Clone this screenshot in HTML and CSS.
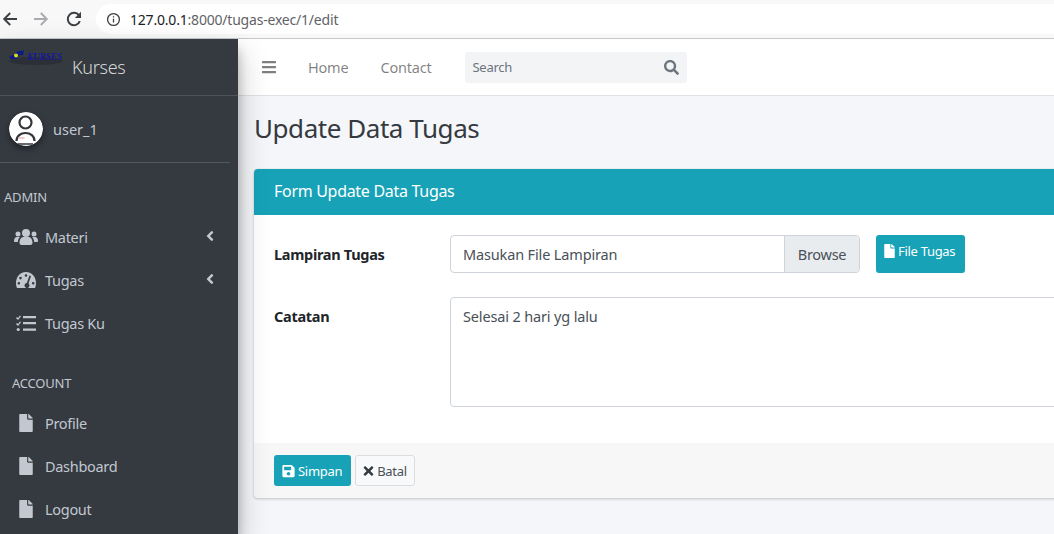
FILE: index.html
```html
<!DOCTYPE html>
<html lang="en">
  <head>
    <meta charset="UTF-8" />
    <title>Update Data Tugas</title>
    <link rel="stylesheet" href="styles.css">
  </head>
  <body>
    <svg class="defs" width="0" height="0">
      <symbol id="i-file" viewBox="0 0 384 512"><path d="M224 136V0H24C10.7 0 0 10.7 0 24v464c0 13.3 10.7 24 24 24h336c13.3 0 24-10.7 24-24V160H248c-13.2 0-24-10.8-24-24zm160-14.1v6.1H256V0h6.1c6.4 0 12.5 2.5 17 7l97.9 98c4.5 4.5 7 10.6 7 16.9z"/></symbol>
      <symbol id="i-angle" viewBox="0 0 256 512"><path d="M31.7 239l136-136c9.4-9.4 24.6-9.4 33.9 0l22.6 22.6c9.4 9.4 9.4 24.6 0 33.9L127.9 256l96.4 96.4c9.4 9.4 9.4 24.6 0 33.9L201.7 409c-9.4 9.4-24.6 9.4-33.9 0l-136-136c-9.5-9.4-9.5-24.6-.1-34z"/></symbol>
    </svg>

    <header class="browser">
      <svg class="nav-btn" viewBox="0 0 16 16" fill="none" stroke="#3c4043" stroke-width="1.9"><path d="M15 8H2.500M8.200 2L2.200 8l6 6"/></svg>
      <svg class="nav-btn nav-fwd" viewBox="0 0 16 16" fill="none" stroke="#a9abae" stroke-width="1.9"><path d="M1 8h12.500M7.800 2l6 6-6 6"/></svg>
      <svg class="nav-btn nav-reload" viewBox="0 0 16 16" fill="none" stroke="#3c4043" stroke-width="2"><path d="M13.800 10.200A6.200 6.200 0 1 1 13 4.400"/><path d="M15 .8v6.200H8.800z" fill="#3c4043" stroke="none"/></svg>
      <div class="omnibox">
        <svg class="info" viewBox="0 0 16 16" fill="none" stroke="#3c4043" stroke-width="1.4"><circle cx="8" cy="8" r="6.300"/><path d="M8 7.200v4M8 4.400v1.500"/></svg>
        <span class="host">127.0.0.1</span><span class="path">:8000/tugas-exec/1/edit</span>
      </div>
    </header>

    <div class="app">
      <aside class="sidebar">
        <div class="brand">
          <svg class="brand-logo" viewBox="0 0 56 18">
            <ellipse cx="28" cy="14" rx="27" ry="4" fill="#2c3036"/>
            <path d="M1 10l6-3 2-2.500 7-1-1 4.500-5 .5-1 3.500H3z" fill="#0c1a8a"/>
            <circle cx="8" cy="8.500" r="2" fill="#dcdc10"/>
            <text x="19" y="13" class="brand-mark" textLength="35" lengthAdjust="spacingAndGlyphs">KURSES</text>
          </svg>
          <span class="brand-text">Kurses</span>
        </div>
        <div class="user">
          <svg class="avatar" viewBox="0 0 34 34">
            <circle cx="17" cy="17" r="17" fill="#fff"/>
            <circle cx="16.500" cy="10.500" r="6" fill="none" stroke="#33373c" stroke-width="2.200"/>
            <path d="M7.500 29c0-5 4-8 9-8s9 3 9 8" fill="none" stroke="#33373c" stroke-width="2.200"/>
            <path d="M9 32h15" stroke="#33373c" stroke-width="1.500"/>
            <rect x="9.500" y="25" width="6" height="2" fill="#f6c9cc"/>
          </svg>
          <span class="user-name">user_1</span>
        </div>

        <p class="menu-head menu-head-admin">ADMIN</p>
        <ul class="menu">
          <li class="menu-item">
            <svg class="menu-icon" viewBox="0 0 24 18"><circle cx="12" cy="5" r="4"/><circle cx="4" cy="6" r="2.500"/><circle cx="20" cy="6" r="2.500"/><path d="M5.500 15c0-4 2-6 4-6h5c2 0 4 2 4 6 0 1-1 2-2 2H7.500c-1 0-2-1-2-2zM0 13c0-2 1-4 3-4h3c-1.500 1-2 3-2.200 5H1c-.6 0-1-.4-1-1zM24 13c0-2-1-4-3-4h-3c1.500 1 2 3 2.200 5H23c.6 0 1-.4 1-1z"/></svg>
            <span>Materi</span>
            <svg class="menu-arrow"><use href="#i-angle"/></svg>
          </li>
          <li class="menu-item">
            <svg class="menu-icon" viewBox="0 0 24 18"><path fill-rule="evenodd" d="M12 1C5.500 1 2 6.500 2 12c0 2 .5 4 1 5h18c.5-1 1-3 1-5 0-5.500-3.500-11-10-11zM12 3.200a1.300 1.300 0 1 1 0 2.600 1.300 1.300 0 0 1 0-2.600zM6.500 5.800a1.300 1.300 0 1 1 0 2.600 1.300 1.300 0 0 1 0-2.600zM4.800 11a1.300 1.300 0 1 1 0 2.600 1.300 1.300 0 0 1 0-2.600zM19.200 11a1.300 1.300 0 1 1 0 2.600 1.300 1.300 0 0 1 0-2.600zM15.500 4.500l1.500.5-2.500 7.500a2.500 2.500 0 1 1-1.700-.5z"/></svg>
            <span>Tugas</span>
            <svg class="menu-arrow"><use href="#i-angle"/></svg>
          </li>
          <li class="menu-item">
            <svg class="menu-icon" viewBox="0 0 24 18"><path d="M3 3l1 1 2-2.500 1 .8L4 6 2 4zM3 9l1 1 2-2.500 1 .8L4 12 2 10z"/><circle cx="4.200" cy="15.500" r="1.600"/><path d="M9 2h13v2.200H9zM9 8h13v2.200H9zM9 14.500h13v2.200H9z"/></svg>
            <span>Tugas Ku</span>
          </li>
        </ul>

        <p class="menu-head menu-head-account">ACCOUNT</p>
        <ul class="menu">
          <li class="menu-item">
            <svg class="menu-icon file-icon"><use href="#i-file"/></svg>
            <span>Profile</span>
          </li>
          <li class="menu-item">
            <svg class="menu-icon file-icon"><use href="#i-file"/></svg>
            <span>Dashboard</span>
          </li>
          <li class="menu-item">
            <svg class="menu-icon file-icon"><use href="#i-file"/></svg>
            <span>Logout</span>
          </li>
        </ul>
      </aside>

      <div class="main">
        <nav class="topbar">
          <svg class="bars" viewBox="0 0 448 512"><path d="M16 132h416c8.837 0 16-7.163 16-16V76c0-8.837-7.163-16-16-16H16C7.163 60 0 67.163 0 76v40c0 8.837 7.163 16 16 16zm0 160h416c8.837 0 16-7.163 16-16v-40c0-8.837-7.163-16-16-16H16c-8.837 0-16 7.163-16 16v40c0 8.837 7.163 16 16 16zm0 160h416c8.837 0 16-7.163 16-16v-40c0-8.837-7.163-16-16-16H16c-8.837 0-16 7.163-16 16v40c0 8.837 7.163 16 16 16z"/></svg>
          <a class="top-link">Home</a>
          <a class="top-link">Contact</a>
          <div class="search">
            <span>Search</span>
            <svg class="search-icon" viewBox="0 0 512 512"><path d="M505 442.7L405.3 343c-4.5-4.5-10.6-7-17-7H372c27.6-35.3 44-79.7 44-128C416 93.1 322.9 0 208 0S0 93.1 0 208s93.1 208 208 208c48.3 0 92.7-16.4 128-44v16.3c0 6.4 2.5 12.5 7 17l99.7 99.7c9.4 9.4 24.6 9.4 33.9 0l28.3-28.3c9.4-9.4 9.4-24.6.1-34zM208 336c-70.7 0-128-57.2-128-128 0-70.7 57.2-128 128-128 70.7 0 128 57.2 128 128 0 70.7-57.2 128-128 128z"/></svg>
          </div>
        </nav>

        <section class="content">
          <h1 class="page-title">Update Data Tugas</h1>
          <div class="card">
            <div class="card-head">Form Update Data Tugas</div>
            <div class="card-body">
              <div class="form-row">
                <label class="form-label">Lampiran Tugas</label>
                <div class="file-input">
                  <span class="file-text">Masukan File Lampiran</span>
                  <span class="file-browse">Browse</span>
                </div>
                <a class="btn btn-info btn-file">
                  <svg class="btn-icon"><use href="#i-file"/></svg>File Tugas
                </a>
              </div>
              <div class="form-row form-row-notes">
                <label class="form-label">Catatan</label>
                <div class="notes">Selesai 2 hari yg lalu</div>
              </div>
            </div>
            <div class="card-foot">
              <a class="btn btn-info">
                <svg class="btn-icon btn-icon-save" viewBox="0 0 448 512"><path d="M433.941 129.941l-83.882-83.882A48 48 0 0 0 316.118 32H48C21.49 32 0 53.49 0 80v352c0 26.51 21.49 48 48 48h352c26.51 0 48-21.49 48-48V163.882a48 48 0 0 0-14.059-33.941zM224 416c-35.346 0-64-28.654-64-64 0-35.346 28.654-64 64-64s64 28.654 64 64c0 35.346-28.654 64-64 64zm96-304.52V212c0 6.627-5.373 12-12 12H76c-6.627 0-12-5.373-12-12V108c0-6.627 5.373-12 12-12h228.52c3.183 0 6.235 1.264 8.485 3.515l3.48 3.48A11.996 11.996 0 0 1 320 111.48z"/></svg>Simpan
              </a>
              <a class="btn btn-light">
                <svg class="btn-icon btn-icon-x" viewBox="0 0 352 512"><path d="M242.72 256l100.07-100.07c12.28-12.28 12.28-32.19 0-44.48l-22.24-22.24c-12.28-12.28-32.19-12.28-44.48 0L176 189.28 75.93 89.21c-12.28-12.28-32.19-12.28-44.48 0L9.21 111.45c-12.28 12.28-12.28 32.19 0 44.48L109.28 256 9.21 356.07c-12.28 12.28-12.28 32.19 0 44.48l22.24 22.24c12.28 12.28 32.2 12.28 44.48 0L176 322.72l100.07 100.07c12.28 12.28 32.2 12.28 44.48 0l22.24-22.24c12.28-12.28 12.28-32.19 0-44.48L242.72 256z"/></svg>Batal
              </a>
            </div>
          </div>
        </section>
      </div>
    </div>
  </body>
</html>
```

FILE: styles.css
```css
* {
  box-sizing: border-box;
}
html,
body {
  height: 534px;
  overflow: hidden;
}
body {
  margin: 0;
  font-family: "Noto Sans", "Open Sans", sans-serif;
  font-size: 14.5px;
  letter-spacing: -0.3px;
  color: #495057;
  background: #f4f6f9;
}
.defs {
  display: block;
}
p {
  margin: 0;
}
ul {
  margin: 0;
  padding: 0;
  list-style: none;
}

/* browser chrome */
.browser {
  height: 39px;
  display: flex;
  align-items: center;
  padding-left: 2px;
  background: #f8f8f8;
  border-bottom: 1px solid #c8c9cb;
}
.nav-btn {
  width: 16px;
  height: 16px;
}
.nav-fwd {
  margin-left: 15px;
}
.nav-reload {
  margin: 0 14px 0 17px;
}
.omnibox {
  flex: 1;
  height: 30px;
  display: flex;
  align-items: center;
  padding-left: 10px;
  font-size: 14px;
  letter-spacing: -0.2px;
  background: #fff;
  border-radius: 15px 0 0 15px;
}
.info {
  width: 15px;
  height: 15px;
  margin-right: 9px;
}
.host {
  color: #202124;
}
.path {
  color: #5f6368;
}

.app {
  display: flex;
  height: 495px;
}

/* sidebar */
.sidebar {
  width: 238px;
  flex: none;
  background: #343a40;
  color: #c2c7d0;
  box-shadow: 0 14px 28px rgba(0, 0, 0, 0.25), 0 10px 10px rgba(0, 0, 0, 0.22);
  position: relative;
  z-index: 2;
}
.brand {
  height: 57px;
  display: flex;
  padding-left: 8px;
  border-bottom: 1px solid #4b545c;
}
.brand-logo {
  width: 56px;
  height: 18px;
  margin-top: 8px;
  overflow: visible;
}
.brand-mark {
  font-family: "Liberation Serif", serif;
  font-style: italic;
  font-weight: 700;
  font-size: 11px;
  letter-spacing: 0;
  fill: #14189c;
}
.brand-text {
  margin: 16px 0 0 8px;
  font-size: 18px;
  font-weight: 300;
  line-height: 24px;
  color: rgba(255, 255, 255, 0.8);
}
.user {
  height: 67px;
  margin-right: 8px;
  display: flex;
  align-items: center;
  padding-left: 9px;
  border-bottom: 1px solid #4f5962;
}
.avatar {
  width: 34px;
  height: 34px;
  border-radius: 50%;
  box-shadow: 0 3px 6px rgba(0, 0, 0, 0.4);
}
.user-name {
  margin-left: 10px;
  letter-spacing: 0;
}
.menu-head {
  font-size: 13px;
  line-height: 20px;
  letter-spacing: -0.2px;
}
.menu-head-admin {
  padding: 24px 0 8px 4px;
}
.menu-head-account {
  padding: 29px 0 8px 12px;
}
.menu-item {
  height: 43px;
  display: flex;
  align-items: center;
  padding-left: 14px;
}
.menu-icon {
  width: 24px;
  height: 18px;
  margin-right: 7px;
  fill: #c2c7d0;
  flex: none;
}
.file-icon {
  width: 14px;
  height: 18px;
  margin-left: 5px;
  margin-right: 12px;
}
.menu-arrow {
  width: 12px;
  height: 16px;
  margin: -2px 22px 0 auto;
  fill: #c2c7d0;
}

/* top bar */
.main {
  flex: 1;
  min-width: 0;
  overflow: hidden;
}
.topbar {
  height: 57px;
  display: flex;
  align-items: center;
  padding-left: 24px;
  background: #fff;
  border-bottom: 1px solid #dee2e6;
}
.bars {
  width: 14px;
  height: 16px;
  margin-right: 32px;
  fill: #7f7f7f;
}
.top-link {
  margin-right: 32px;
  letter-spacing: -0.2px;
  color: rgba(0, 0, 0, 0.5);
}
.search {
  width: 222px;
  height: 31px;
  margin-left: 1px;
  display: flex;
  align-items: center;
  justify-content: space-between;
  padding: 0 8px;
  font-size: 13px;
  color: #6c757d;
  background: #f2f4f6;
  border-radius: 3px;
}
.search-icon {
  width: 15px;
  height: 15px;
  fill: #6c757d;
}

/* content */
.content {
  padding: 14px 0 0 16px;
}
.page-title {
  margin: 0 0 23px;
  font-size: 26px;
  font-weight: 400;
  line-height: 36px;
  letter-spacing: -0.45px;
  color: #343a40;
}
.card {
  width: 880px;
  background: #fff;
  border-radius: 4px;
  box-shadow: 0 0 1px rgba(0, 0, 0, 0.125), 0 1px 3px rgba(0, 0, 0, 0.2);
}
.card-head {
  height: 46px;
  padding-left: 20px;
  font-size: 16px;
  line-height: 45px;
  color: #fff;
  background: #17a2b8;
  border-radius: 4px 4px 0 0;
}
.card-body {
  height: 228px;
  padding: 20px 20px 0;
}
.form-row {
  display: flex;
  align-items: flex-start;
}
.form-row-notes {
  margin-top: 24px;
}
.form-label {
  width: 176px;
  flex: none;
  padding-top: 8px;
  font-weight: 700;
  line-height: 22px;
  color: #212529;
}
.file-input {
  width: 410px;
  height: 38px;
  display: flex;
  line-height: 36px;
  border: 1px solid #ced4da;
  border-radius: 4px;
}
.file-text {
  flex: 1;
  padding-left: 12px;
  letter-spacing: -0.15px;
}
.file-browse {
  width: 75px;
  text-align: center;
  background: #e9ecef;
  border-left: 1px solid #ced4da;
  border-radius: 0 3px 3px 0;
}
.notes {
  flex: 1;
  height: 110px;
  padding: 7px 12px;
  line-height: 22px;
  letter-spacing: -0.15px;
  border: 1px solid #ced4da;
  border-radius: 4px;
}
.card-foot {
  height: 55px;
  display: flex;
  align-items: flex-start;
  gap: 4px;
  padding: 12px 20px 0;
  background: #f7f7f7;
  border-radius: 0 0 4px 4px;
}
.btn {
  height: 31px;
  display: flex;
  align-items: center;
  padding: 0 9px 0 8px;
  font-size: 13px;
  border-radius: 3px;
}
.btn-info {
  color: #fff;
  fill: #fff;
  background: #17a2b8;
}
.btn-light {
  padding: 0 7px;
  color: #495057;
  fill: #343a40;
  background: #f8f9fa;
  border: 1px solid #ddd;
}
.btn-file {
  height: 38px;
  margin-left: 16px;
  padding: 0 10px 6px 8px;
}
.btn-icon {
  width: 11px;
  height: 14px;
  margin-right: 3px;
}
.btn-icon-save {
  width: 13px;
}
```
